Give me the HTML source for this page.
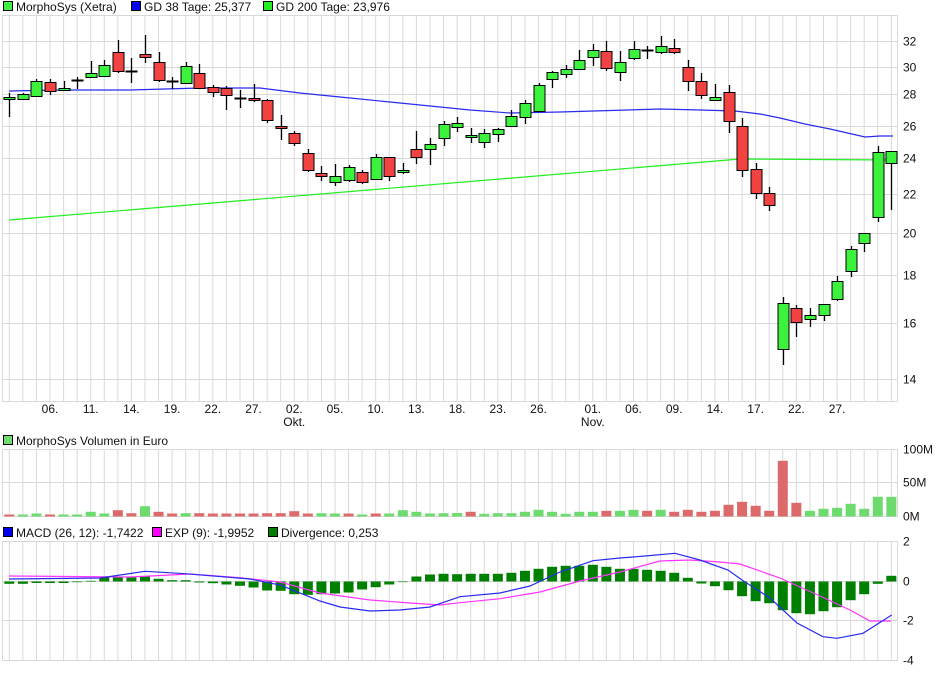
<!DOCTYPE html>
<html><head><meta charset="utf-8">
<style>
html,body{margin:0;padding:0;background:#fff;}
body{width:940px;height:670px;overflow:hidden;font-family:"Liberation Sans",sans-serif;}
svg text{font-family:"Liberation Sans",sans-serif;font-size:12px;fill:#111;}
</style></head>
<body>
<svg id="s" width="940" height="670" xmlns="http://www.w3.org/2000/svg"></svg>
<script>
var S=document.getElementById('s');var o='';
function X(i){return 9.3+13.57*i;}
function ln(x1,y1,x2,y2,c,w){o+='<line x1="'+x1+'" y1="'+y1+'" x2="'+x2+'" y2="'+y2+'" stroke="'+c+'" stroke-width="'+(w||1)+'"/>';}
function rc(x,y,w,h,f,s){o+='<rect x="'+x+'" y="'+y+'" width="'+w+'" height="'+h+'" fill="'+f+'"'+(s?' stroke="'+s+'" stroke-width="1"':'')+'/>';}
function tx(x,y,t,a){o+='<text x="'+x+'" y="'+y+'"'+(a?' text-anchor="'+a+'"':'')+'>'+t+'</text>';}
var G='#d9d9d9';
function panel(t,b,hs){
  for(var i=0;i<66;i++)ln(X(i),t,X(i),b,G);
  ln(2.5,t,2.5,b,G);ln(897.5,t,897.5,b,G);
  hs.forEach(function(y){ln(2.5,y,897.5,y,G);});
}
// main
panel(15.5,401.5,[15.5,41.5,67.5,94.5,126.5,158.5,194.5,233.5,275.5,323.5,379.5,401.5]);
panel(449.5,516.5,[449.5,482.5,516.5]);
panel(541.5,660.5,[541.5,581.5,620.5,660.5]);
// MAs
o+='<polyline fill="none" stroke="#22ee22" stroke-width="1.2" points="9,220 740,159 891,160"/>';
o+='<polyline fill="none" stroke="#2a2af0" stroke-width="1.2" points="9,91 60,90 130,90 200,88 260,88 300,93 350,98 400,103 470,110 510,113 560,112 660,109 700,110 735,111 760,114 780,118 805,124 830,129 865,137 880,136 893,136"/>';
var C=[[97,99,93,117,'g'],[94,99,93,100,'g'],[81,96,79,97,'g'],[82,91,79,95,'r'],[88,90,81,91,'g'],[80,81,77,89,'d'],[73,77,61,77,'g'],[65,76,60,77,'g'],[52,71,40,73,'r'],[71,72,58,83,'d'],[54,57,35,63,'r'],[62,80,52,82,'r'],[81,81,77,89,'d'],[66,83,62,83,'g'],[73,88,64,89,'r'],[87,92,85,97,'r'],[88,95,86,110,'r'],[98,98,90,108,'d'],[98,99,84,102,'r'],[100,120,99,123,'r'],[126,128,115,140,'r'],[133,143,131,146,'r'],[153,170,149,172,'r'],[173,176,166,181,'r'],[176,182,164,186,'g'],[167,180,165,182,'g'],[172,182,170,184,'r'],[157,179,154,180,'g'],[157,176,157,181,'r'],[170,172,163,174,'g'],[149,157,131,164,'r'],[144,149,138,165,'g'],[124,138,121,146,'g'],[123,127,117,132,'g'],[135,137,128,143,'g'],[133,142,129,148,'g'],[129,134,128,142,'g'],[116,126,110,126,'g'],[103,117,100,124,'g'],[85,111,83,111,'g'],[72,79,71,88,'g'],[69,74,65,78,'g'],[60,69,50,70,'g'],[50,57,44,66,'g'],[51,68,41,71,'r'],[62,72,51,81,'g'],[49,58,41,60,'g'],[50,50,46,59,'d'],[46,52,36,54,'g'],[48,52,39,54,'r'],[67,81,60,91,'r'],[81,95,73,99,'r'],[97,100,84,100,'g'],[92,121,85,133,'r'],[126,170,118,177,'r'],[169,193,163,199,'r'],[193,205,187,211,'r'],[303,349,297,365,'g'],[308,322,305,337,'r'],[315,319,308,327,'g'],[304,315,304,321,'g'],[281,299,276,301,'g'],[249,271,246,277,'g'],[233,243,233,252,'g'],[152,217,146,222,'g'],[151,163,151,210,'g']];
C.forEach(function(c,i){var x=Math.round(X(i))+0.5;
  ln(x,c[2],x,c[3],'#000',1.3);
  if(c[4]=='d'){rc(x-6,c[0]-0.5,12,2,'#000');}
  else{var h=Math.max(c[1]-c[0],2);rc(x-5.5,c[0]+0.5,11,h,c[4]=='g'?'#3cf23c':'#f24242','#000');}
});
// volume
var V=[[2,'r'],[2,'g'],[3,'g'],[2,'r'],[2,'g'],[2,'g'],[4.7,'g'],[3,'g'],[6.3,'r'],[3.3,'r'],[10.3,'g'],[4.7,'r'],[3,'r'],[3.3,'g'],[3.3,'r'],[3,'r'],[3,'r'],[3,'r'],[3,'r'],[3.3,'r'],[3.3,'r'],[5.3,'r'],[3,'r'],[3.3,'g'],[3,'g'],[3,'r'],[2,'g'],[3,'r'],[3,'g'],[6.3,'g'],[4.7,'g'],[3,'g'],[3.3,'g'],[3.5,'g'],[4.7,'r'],[2.7,'g'],[3.3,'g'],[3.3,'g'],[4.7,'g'],[6.7,'g'],[4.7,'g'],[2.7,'g'],[4.7,'g'],[4.7,'g'],[5.7,'r'],[5.7,'g'],[6.7,'g'],[5.7,'r'],[6.7,'g'],[4.7,'r'],[6.7,'r'],[4.7,'r'],[5.7,'r'],[11.7,'r'],[14.7,'r'],[10.7,'r'],[5.7,'r'],[55.7,'r'],[13.7,'r'],[5.7,'g'],[7.7,'g'],[8.7,'g'],[12.7,'g'],[7.7,'g'],[19.7,'g'],[19.7,'g']];
V.forEach(function(v,i){rc(X(i)-5,516.5-v[0],10,v[0],v[1]=='g'?'#6ddb6d':'#dc6a6a');});
// divergence
var D=[-2.3,-2.3,-1.5,-1.5,-1.5,-0.7,0.7,4,4,4,5,2.7,1.3,1.3,-1,-1.7,-3,-4.3,-6,-9,-9.3,-12.7,-13.3,-12.7,-12,-11,-8,-5.7,-3,-0.6,5,7,7.7,7.3,7.7,7.7,7.7,8.7,10.7,12.7,14.7,15.7,15.7,16.7,14.7,12.7,12.7,11.7,10.7,8.7,3.7,-2,-4.7,-8.7,-14.7,-19.7,-21.7,-28.7,-31.7,-32.7,-29.7,-25.7,-18.7,-12.7,-2.3,5.7];
D.forEach(function(d,i){var z=581.5;if(d>=0)rc(X(i)-5,z-d,10,d,'#008000');else rc(X(i)-5,z,10,-d,'#008000');});
o+='<polyline fill="none" stroke="#ff33ff" stroke-width="1.2" points="9,576 130,577 190,574 240,577.7 280,582 320,593 370,600 410,603 440,605 460,602.7 500,598.7 540,592 580,581 620,572 660,561 690,560 720,562 740,564 780,578 820,596 850,610 870,621 891,621"/>';
o+='<polyline fill="none" stroke="#2a2af0" stroke-width="1.2" points="9,579 100,578 145,571.3 185,573.7 250,579 280,585 320,601 340,607 370,611 400,610 430,607 460,596.7 500,593 530,586 560,572 593,560.7 620,558 645,556 675,553.3 700,560 728,570 742,580 770,598 797,623 823,636.7 837,638.3 863,633.3 891.7,615"/>';
// axis labels
[[32,41.5],[30,67.5],[28,94.5],[26,126.5],[24,158.5],[22,194.5],[20,233.5],[18,275.5],[16,323.5],[14,379.5]].forEach(function(a){tx(903,a[1]+4,a[0]);});
[['100M',449.5],['50M',482.5],['0M',516.5]].forEach(function(a){tx(903,a[1]+4,a[0]);});
[['2',541.5],['0',581.5],['-2',620.5],['-4',660.5]].forEach(function(a){tx(903,a[1]+4,a[0]);});
[['06.',3],['11.',6],['14.',9],['19.',12],['22.',15],['27.',18],['02.',21],['05.',24],['10.',27],['13.',30],['18.',33],['23.',36],['26.',39],['01.',43],['06.',46],['09.',49],['14.',52],['17.',55],['22.',58],['27.',61]].forEach(function(a){tx(X(a[1]),413,a[0],'middle');});
tx(X(21),426,'Okt.','middle');tx(X(43),426,'Nov.','middle');
// legends
function lg(x,y,c,t){rc(x+0.5,y-8.5,9,9,c,'#000');tx(x+13,y+1,t);}
lg(3,10,'#3cf23c','MorphoSys (Xetra)');lg(131,10,'#0000ee','GD 38 Tage: 25,377');lg(263,10,'#22ee22','GD 200 Tage: 23,976');
lg(3,444,'#6ddb6d','MorphoSys Volumen in Euro');
lg(3,536,'#0000ee','MACD (26, 12): -1,7422');lg(152,536,'#ff00ff','EXP (9): -1,9952');lg(268,536,'#008000','Divergence: 0,253');
S.innerHTML=o;
</script>
</body></html>
